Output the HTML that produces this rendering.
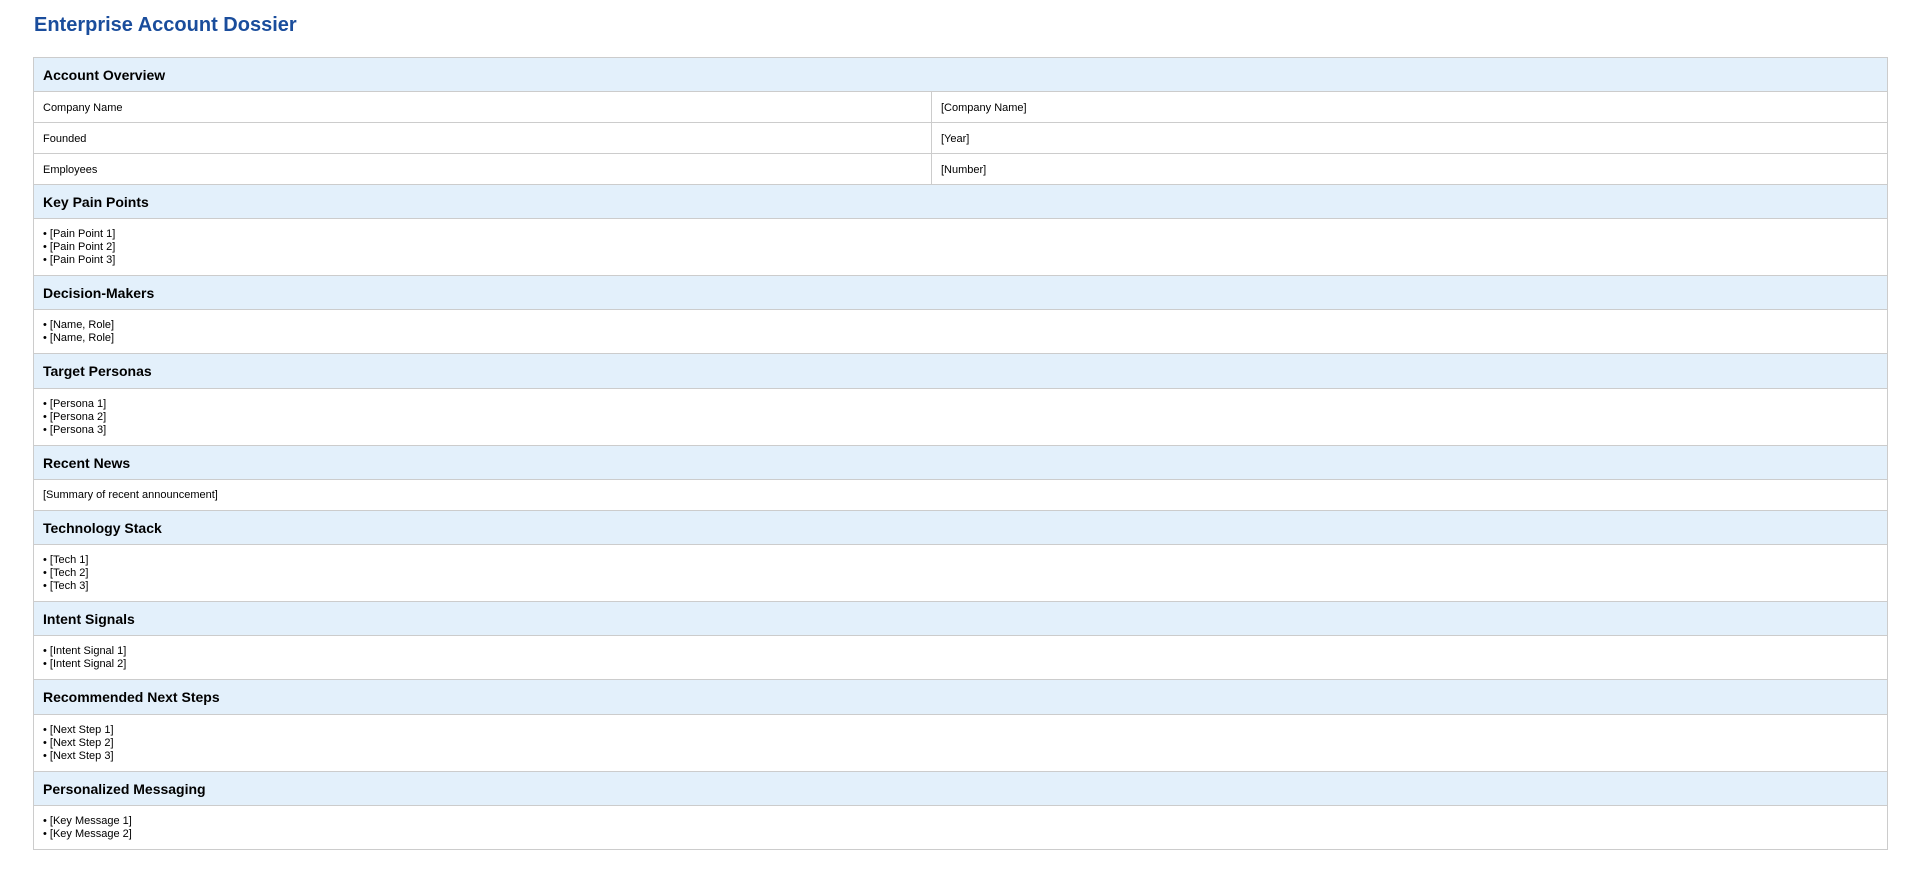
<!DOCTYPE html>
<html><head><meta charset="utf-8"><style>
body{margin:0;background:#fff;font-family:"Liberation Sans",Arial,sans-serif;color:#000}
h1{position:absolute;left:34px;top:14px;margin:0;font-size:20px;color:#1a4d9c;font-weight:bold}
.t{position:absolute;left:33px;top:57px;width:1853px;border:1px solid #ccc;border-bottom:none}
.h{height:34.3px;line-height:34px;background:#e3f0fb;border-bottom:1px solid #ccc;font-size:14px;font-weight:bold;padding-left:9px;box-sizing:border-box}
.r{display:flex;height:30.8px;border-bottom:1px solid #ccc;font-size:11px;box-sizing:border-box;line-height:30px}
.r div{padding-left:9px;padding-top:1px;box-sizing:border-box}
.r .a{width:898px;border-right:1px solid #ccc}
.c{padding:9px 9px 8px;font-size:11px;line-height:13px;border-bottom:1px solid #ccc}
</style></head><body>
<h1>Enterprise Account Dossier</h1>
<div class="t">
<div class="h">Account Overview</div>
<div class="r"><div class="a">Company Name</div><div>[Company Name]</div></div>
<div class="r"><div class="a">Founded</div><div>[Year]</div></div>
<div class="r"><div class="a">Employees</div><div>[Number]</div></div>
<div class="h">Key Pain Points</div>
<div class="c">• [Pain Point 1]<br>• [Pain Point 2]<br>• [Pain Point 3]</div>
<div class="h">Decision-Makers</div>
<div class="c">• [Name, Role]<br>• [Name, Role]</div>
<div class="h">Target Personas</div>
<div class="c">• [Persona 1]<br>• [Persona 2]<br>• [Persona 3]</div>
<div class="h">Recent News</div>
<div class="c">[Summary of recent announcement]</div>
<div class="h">Technology Stack</div>
<div class="c">• [Tech 1]<br>• [Tech 2]<br>• [Tech 3]</div>
<div class="h">Intent Signals</div>
<div class="c">• [Intent Signal 1]<br>• [Intent Signal 2]</div>
<div class="h">Recommended Next Steps</div>
<div class="c">• [Next Step 1]<br>• [Next Step 2]<br>• [Next Step 3]</div>
<div class="h">Personalized Messaging</div>
<div class="c">• [Key Message 1]<br>• [Key Message 2]</div>
</div>
</body></html>
